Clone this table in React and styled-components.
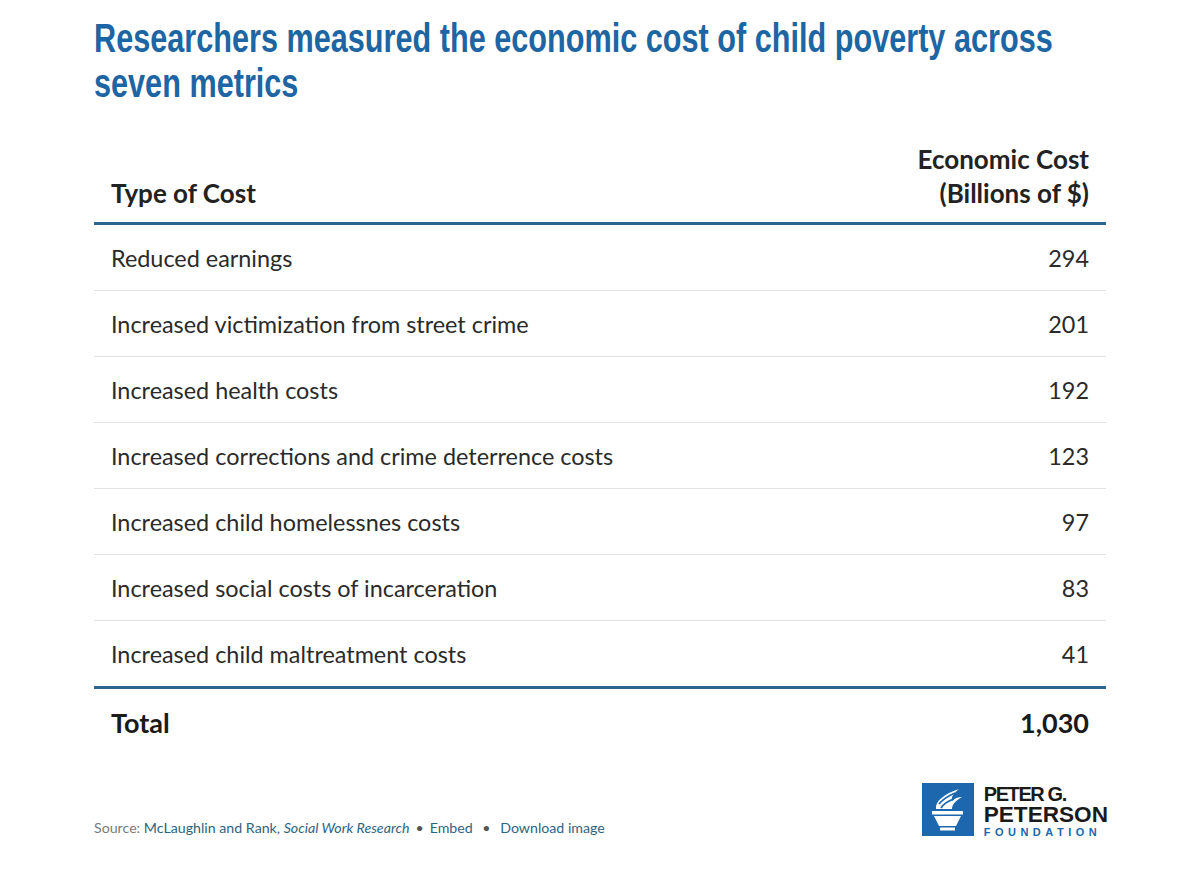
import React from 'react'
import styled, { createGlobalStyle } from 'styled-components'

const GlobalStyle = createGlobalStyle`
  body {
    margin: 0;
    background: #fff;
    font-family: Lato, "Liberation Sans", sans-serif;
  }
`

const Page = styled.div`
  width: 1200px;
  height: 871px;
  padding: 16px 94px 0 94px;
  box-sizing: border-box;
  overflow: hidden;
`

// condensed headline face isn't installed, so squeeze a sans bold
const Title = styled.h1`
  margin: 0;
  font-family: "Liberation Sans", Arial, sans-serif;
  font-weight: 700;
  font-size: 40px;
  line-height: 45px;
  color: #1d65a3;
  white-space: nowrap;
  transform: scaleX(0.766);
  transform-origin: left top;
`

const Table = styled.div`
  margin-top: 36px;
  width: 1012px;
`

const HeadRow = styled.div`
  display: flex;
  justify-content: space-between;
  align-items: flex-end;
  padding: 0 17px 12px 17px;
  border-bottom: 3px solid #2c6690;
  font-weight: 700;
  font-size: 26px;
  line-height: 34px;
  color: #222;
`

const HeadRight = styled.div`
  text-align: right;
`

const Row = styled.div`
  display: flex;
  justify-content: space-between;
  align-items: center;
  height: 65px;
  padding: 0 17px;
  border-bottom: ${p => (p.last ? '3px solid #2c6690' : '1px solid #e3e3e3')};
  font-size: 23.4px;
  color: #2a2a2a;
`

const TotalRow = styled(Row)`
  height: 67px;
  border-bottom: none;
  font-weight: 700;
  font-size: 27px;
  color: #1a1a1a;
`

const Footer = styled.div`
  display: flex;
  justify-content: space-between;
  align-items: flex-end;
  width: 1012px;
  margin-top: 27px;
`

const Source = styled.div`
  font-size: 14.2px;
  line-height: 18px;
  color: #7a7a7a;
  margin-bottom: 1px;
`

const Link = styled.span`
  color: #2f6382;
  font-style: ${p => (p.italic ? 'italic' : 'normal')};
`

const Dot = styled.span`
  color: #555;
  margin: 0 6px;
`

const Logo = styled.div`
  display: flex;
  align-items: flex-start;
  gap: 10px;
  margin-right: -2px;
`

const LogoText = styled.div`
  display: flex;
  flex-direction: column;
  font-family: "Liberation Sans", Arial, sans-serif;
  font-weight: 700;
  padding-top: 1px;
`

const LogoLine = styled.span`
  font-size: ${p => p.size}px;
  line-height: ${p => p.lh}px;
  letter-spacing: ${p => p.ls || 0}px;
  color: ${p => p.color || '#1a1a1a'};
  white-space: nowrap;
`

const rows = [
  ['Reduced earnings', '294'],
  ['Increased victimization from street crime', '201'],
  ['Increased health costs', '192'],
  ['Increased corrections and crime deterrence costs', '123'],
  ['Increased child homelessnes costs', '97'],
  ['Increased social costs of incarceration', '83'],
  ['Increased child maltreatment costs', '41'],
]

const Torch = () => (
  <svg width="52" height="53" viewBox="0 0 52 53">
    <rect width="52" height="53" fill="#1c67ad" />
    <path
      d="M14 26 C13 18 22 11 37 6 C31 11 29 14 30 18 C33 15 36 14 40 14 C33 18 30 22 30 26 Z"
      fill="#fff"
    />
    <path d="M17 21 C21 16 26 13 33 10" stroke="#1c67ad" strokeWidth="1.8" fill="none" />
    <path d="M19 25 C22 20 26 18 32 16" stroke="#1c67ad" strokeWidth="1.8" fill="none" />
    <rect x="10" y="28" width="31" height="3.5" fill="#fff" />
    <path d="M12 33 H39 L34 43 H17 Z" fill="#fff" />
    <rect x="18" y="44.5" width="15" height="3" fill="#fff" />
  </svg>
)

export default function App() {
  return (
    <Page>
      <GlobalStyle />
      <Title>
        Researchers measured the economic cost of child poverty across
        <br />
        seven metrics
      </Title>
      <Table>
        <HeadRow>
          <div>Type of Cost</div>
          <HeadRight>
            Economic Cost
            <br />
            (Billions of $)
          </HeadRight>
        </HeadRow>
        {rows.map(([label, value], i) => (
          <Row key={label} last={i === rows.length - 1}>
            <span>{label}</span>
            <span>{value}</span>
          </Row>
        ))}
        <TotalRow>
          <span>Total</span>
          <span>1,030</span>
        </TotalRow>
      </Table>
      <Footer>
        <Source>
          Source: <Link>McLaughlin and Rank, </Link>
          <Link italic>Social Work Research</Link>
          <Dot>•</Dot>
          <Link>Embed</Link>
          <Dot> • </Dot>
          <Link>Download image</Link>
        </Source>
        <Logo>
          <Torch />
          <LogoText>
            <LogoLine size={20} lh={20} ls={-1.4}>PETER G.</LogoLine>
            <LogoLine size={22.6} lh={22}>PETERSON</LogoLine>
            <LogoLine size={11} lh={12} ls={4.5} color="#1c67ad">
              FOUNDATION
            </LogoLine>
          </LogoText>
        </Logo>
      </Footer>
    </Page>
  )
}
